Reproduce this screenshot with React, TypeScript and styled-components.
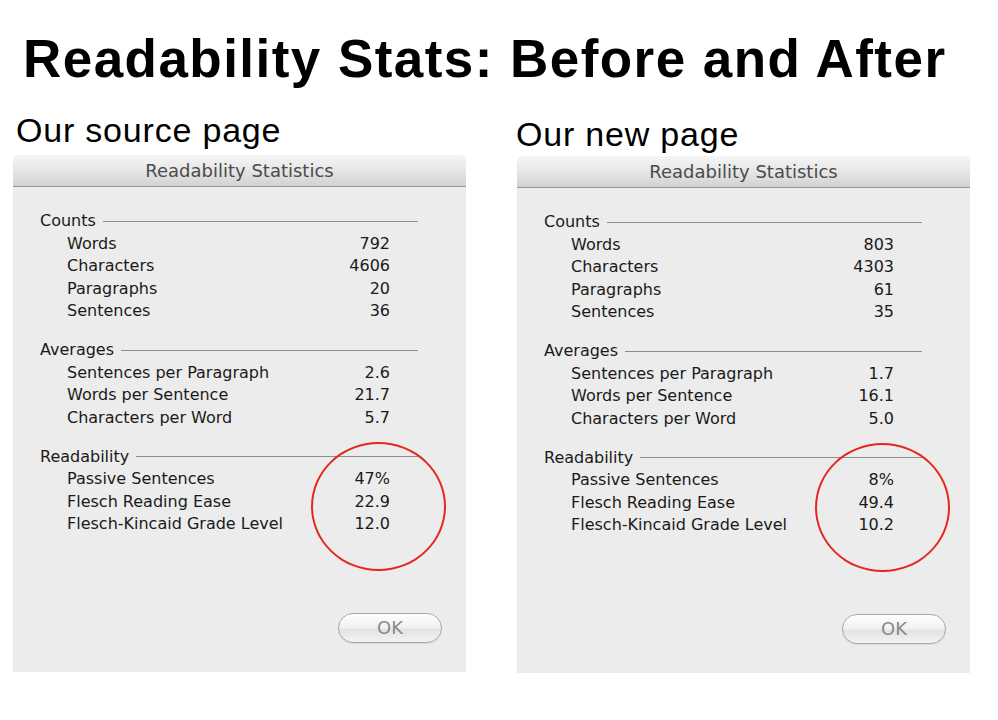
import React from "react";
import styled, { createGlobalStyle } from "styled-components";

const GlobalStyle = createGlobalStyle`
  html, body { margin: 0; padding: 0; background: #ffffff; }
  body { width: 998px; height: 720px; overflow: hidden; }
`;

const Page = styled.div`
  width: 998px;
  height: 720px;
  padding-top: 32px;
  box-sizing: border-box;
  background: #ffffff;
`;

const Heading = styled.h1`
  margin: 0;
  padding-left: 23px;
  font-family: "Liberation Sans", Arial, sans-serif;
  font-weight: 700;
  font-size: 53px;
  line-height: 53px;
  letter-spacing: 1.45px;
  color: #000;
  white-space: nowrap;
`;

const Columns = styled.div`
  display: grid;
  grid-template-columns: 453px 453px;
  column-gap: 51px;
  padding-left: 13px;
  align-items: start;
`;

const Column = styled.section<{ $top: number }>`
  display: flex;
  flex-direction: column;
  padding-top: ${(p) => p.$top}px;
`;

const Subtitle = styled.h2<{ $indent: number; $gap: number }>`
  margin: 0 0 ${(p) => p.$gap}px ${(p) => p.$indent}px;
  font-family: "Liberation Sans", Arial, sans-serif;
  font-weight: 400;
  font-size: 34px;
  line-height: 34px;
  letter-spacing: 0.8px;
  color: #000;
  white-space: nowrap;
`;

const Dialog = styled.div`
  position: relative;
  width: 453px;
  height: 517px;
  display: flex;
  flex-direction: column;
  background: #ececec;
  border-radius: 6px 6px 0 0;
  font-family: "DejaVu Sans", "Lucida Grande", sans-serif;
  color: #1a1a1a;
`;

const TitleBar = styled.div`
  height: 31px;
  line-height: 32px;
  text-align: center;
  font-size: 18px;
  color: #4b4b4b;
  background: linear-gradient(#f5f5f5 0%, #e8e8e8 45%, #d2d2d2 100%);
  border-bottom: 1px solid #969696;
  border-radius: 6px 6px 0 0;
`;

const Body = styled.div`
  flex: 1;
  padding: 23px 48px 0 27px;
  font-size: 16px;
`;

const Section = styled.div`
  margin-bottom: 16.5px;
`;

const SectionHeader = styled.div`
  display: flex;
  align-items: center;
  gap: 7px;
  line-height: 22.5px;
  &::after {
    content: "";
    flex: 1;
    height: 1px;
    background: #8e8e8e;
  }
`;

const Row = styled.div`
  display: flex;
  justify-content: space-between;
  padding: 0 28px 0 27px;
  line-height: 22.5px;
  white-space: nowrap;
`;

const Footer = styled.div`
  display: flex;
  justify-content: flex-end;
  padding: 0 24px 29px 0;
`;

const OkButton = styled.button`
  width: 104px;
  height: 30px;
  border-radius: 15px;
  border: 1px solid #a9a9a9;
  background: linear-gradient(#fefefe 0%, #f1f1f1 50%, #e3e3e3 55%, #f3f3f3 100%);
  box-shadow: 0 1px 1px rgba(0, 0, 0, 0.08);
  font-family: "DejaVu Sans", "Lucida Grande", sans-serif;
  font-size: 18px;
  color: #8a8a8a;
  padding: 0;
  line-height: 28px;
`;

const HighlightCircle = styled.div`
  position: absolute;
  left: 298px;
  top: 287px;
  width: 135px;
  height: 129px;
  box-sizing: border-box;
  border: 2.5px solid #e3281d;
  border-radius: 50%;
  pointer-events: none;
`;

type Stat = [string, string];
type Group = { title: string; rows: Stat[] };

const leftData: Group[] = [
  {
    title: "Counts",
    rows: [
      ["Words", "792"],
      ["Characters", "4606"],
      ["Paragraphs", "20"],
      ["Sentences", "36"],
    ],
  },
  {
    title: "Averages",
    rows: [
      ["Sentences per Paragraph", "2.6"],
      ["Words per Sentence", "21.7"],
      ["Characters per Word", "5.7"],
    ],
  },
  {
    title: "Readability",
    rows: [
      ["Passive Sentences", "47%"],
      ["Flesch Reading Ease", "22.9"],
      ["Flesch-Kincaid Grade Level", "12.0"],
    ],
  },
];

const rightData: Group[] = [
  {
    title: "Counts",
    rows: [
      ["Words", "803"],
      ["Characters", "4303"],
      ["Paragraphs", "61"],
      ["Sentences", "35"],
    ],
  },
  {
    title: "Averages",
    rows: [
      ["Sentences per Paragraph", "1.7"],
      ["Words per Sentence", "16.1"],
      ["Characters per Word", "5.0"],
    ],
  },
  {
    title: "Readability",
    rows: [
      ["Passive Sentences", "8%"],
      ["Flesch Reading Ease", "49.4"],
      ["Flesch-Kincaid Grade Level", "10.2"],
    ],
  },
];

function StatsDialog({ data }: { data: Group[] }) {
  return (
    <Dialog>
      <TitleBar>Readability Statistics</TitleBar>
      <Body>
        {data.map((g) => (
          <Section key={g.title}>
            <SectionHeader>{g.title}</SectionHeader>
            {g.rows.map(([label, value]) => (
              <Row key={label}>
                <span>{label}</span>
                <span>{value}</span>
              </Row>
            ))}
          </Section>
        ))}
      </Body>
      <Footer>
        <OkButton>OK</OkButton>
      </Footer>
      <HighlightCircle />
    </Dialog>
  );
}

export default function App() {
  return (
    <>
      <GlobalStyle />
      <Page>
        <Heading>Readability Stats: Before and After</Heading>
        <Columns>
          <Column $top={28}>
            <Subtitle $indent={3} $gap={8}>Our source page</Subtitle>
            <StatsDialog data={leftData} />
          </Column>
          <Column $top={32}>
            <Subtitle $indent={-1} $gap={5}>Our new page</Subtitle>
            <StatsDialog data={rightData} />
          </Column>
        </Columns>
      </Page>
    </>
  );
}
